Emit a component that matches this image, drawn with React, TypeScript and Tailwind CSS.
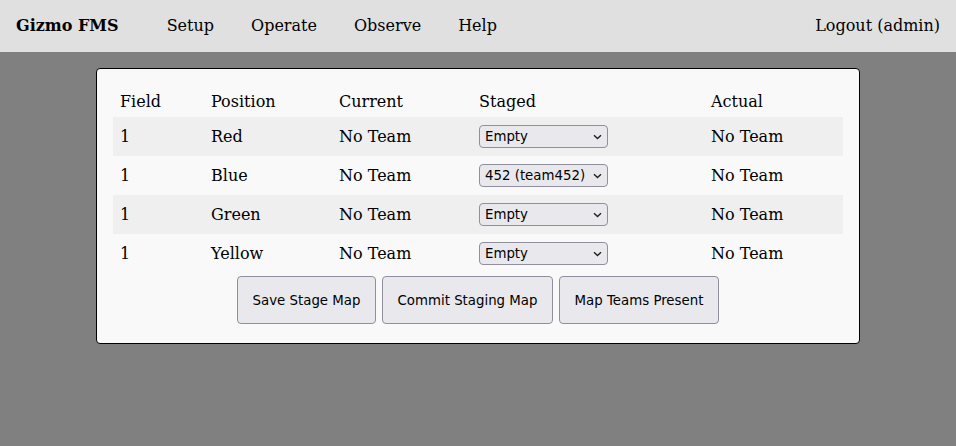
import { useState } from "react";

type Row = { field: number; position: string; current: string; staged: string; actual: string };

const teams = ["Empty", "452 (team452)"];

const initialRows: Row[] = [
  { field: 1, position: "Red", current: "No Team", staged: "Empty", actual: "No Team" },
  { field: 1, position: "Blue", current: "No Team", staged: "452 (team452)", actual: "No Team" },
  { field: 1, position: "Green", current: "No Team", staged: "Empty", actual: "No Team" },
  { field: 1, position: "Yellow", current: "No Team", staged: "Empty", actual: "No Team" },
];

const cols = "grid grid-cols-[91px_128px_140px_232px_139px] items-center";

function Chevron() {
  return (
    <svg
      width="9"
      height="6"
      viewBox="0 0 9 6"
      className="absolute right-[6px] top-[9px] pointer-events-none"
      fill="none"
      stroke="#222"
      strokeWidth="1.4"
    >
      <path d="M1 1.2 L4.5 4.6 L8 1.2" />
    </svg>
  );
}

export default function App() {
  const [rows, setRows] = useState<Row[]>(initialRows);

  const setStaged = (i: number, v: string) =>
    setRows(rows.map((r, j) => (j === i ? { ...r, staged: v } : r)));

  return (
    <div className="min-h-screen bg-[#808080] text-black font-['DejaVu_Serif',serif] text-base">
      <nav className="h-[52px] bg-[#e0e0e0] flex items-center px-4">
        <span className="font-bold mr-[48px]">Gizmo FMS</span>
        <div className="flex gap-[37px]">
          <a>Setup</a>
          <a>Operate</a>
          <a>Observe</a>
          <a>Help</a>
        </div>
        <a className="ml-auto">Logout (admin)</a>
      </nav>

      <div className="flex justify-center pt-4">
        <div className="w-[764px] bg-[#f9f9f9] border border-black rounded-[4px] p-4">
          <div className={`${cols} h-[32px] pt-[2px]`}>
            <div className="px-[7px]">Field</div>
            <div className="px-[7px]">Position</div>
            <div className="px-[7px]">Current</div>
            <div className="px-[7px]">Staged</div>
            <div className="px-[7px]">Actual</div>
          </div>
          {rows.map((r, i) => (
            <div key={r.position} className={`${cols} h-[39px] ${i % 2 === 0 ? "bg-[#efefef]" : ""}`}>
              <div className="px-[7px]">{r.field}</div>
              <div className="px-[7px]">{r.position}</div>
              <div className="px-[7px]">{r.current}</div>
              <div className="px-[7px]">
                <div className="relative w-[129px]">
                  <select
                    value={r.staged}
                    onChange={(e) => setStaged(i, e.target.value)}
                    className="appearance-none block w-[129px] h-[23px] pl-[5px] pr-[16px] bg-[#e9e9ed] border border-[#8f8f9d] rounded-[4px] font-['DejaVu_Sans',sans-serif] text-[13.33px] text-black"
                  >
                    {teams.map((t) => (
                      <option key={t}>{t}</option>
                    ))}
                  </select>
                  <Chevron />
                </div>
              </div>
              <div className="px-[7px]">{r.actual}</div>
            </div>
          ))}
          <div className="flex justify-center gap-[6px] mt-[3px] mb-[3px] font-['DejaVu_Sans',sans-serif] text-[13.33px]">
            <button className="h-[48px] w-[139px] pt-[1px] bg-[#e9e9ed] border border-[#8f8f9d] rounded-[4px]">Save Stage Map</button>
            <button className="h-[48px] w-[171px] pt-[1px] bg-[#e9e9ed] border border-[#8f8f9d] rounded-[4px]">Commit Staging Map</button>
            <button className="h-[48px] w-[160px] pt-[1px] bg-[#e9e9ed] border border-[#8f8f9d] rounded-[4px]">Map Teams Present</button>
          </div>
        </div>
      </div>
    </div>
  );
}
